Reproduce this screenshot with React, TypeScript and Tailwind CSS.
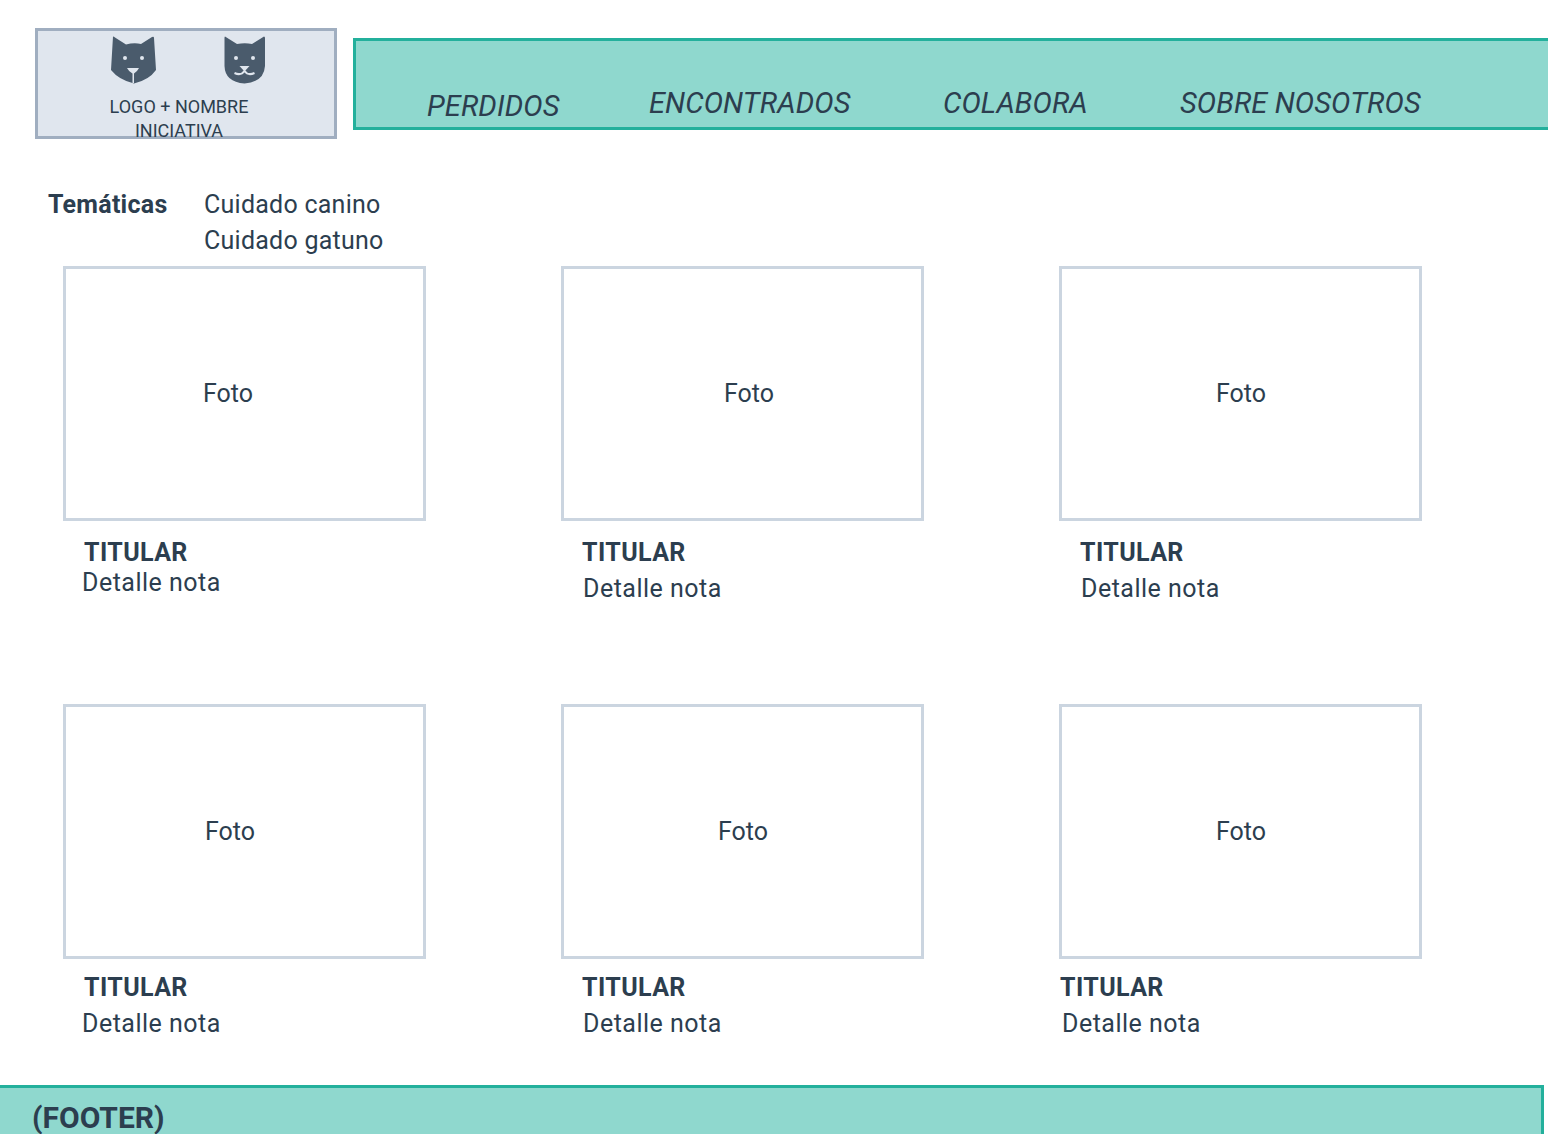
const navItems = [
  { label: "PERDIDOS", className: "w-[222px] mt-[3px]" },
  { label: "ENCONTRADOS", className: "w-[294px]" },
  { label: "COLABORA", className: "w-[237px]" },
  { label: "SOBRE NOSOTROS", className: "w-[280px]" },
];

const cards = [
  { foto: "ml-[137px]", title: "ml-[21px] mt-[14px]", detail: "ml-[19px]" },
  { foto: "ml-[160px]", title: "ml-[21px] mt-[14px]", detail: "ml-[22px] mt-[6px]" },
  { foto: "ml-[154px]", title: "ml-[21px] mt-[14px]", detail: "ml-[22px] mt-[6px]" },
  { foto: "ml-[139px]", title: "ml-[21px] mt-[11px]", detail: "ml-[19px] mt-[6px]" },
  { foto: "ml-[154px]", title: "ml-[21px] mt-[11px]", detail: "ml-[22px] mt-[6px]" },
  { foto: "ml-[154px]", title: "ml-[1px] mt-[11px]", detail: "ml-[3px] mt-[6px]" },
];

function CatIcon() {
  return (
    <svg width="46" height="48" viewBox="0 0 46 48" className="shrink-0">
      <path
        d="M2 0.5 Q3 0.5 4 1.5 L15 8.5 Q23 6.5 30 8 L41 1 Q43 0 43 2 L45 34 Q38 44 23 47.5 Q8 44 0 34 Z"
        fill="#4a5b6c"
      />
      <circle cx="14" cy="22" r="2" fill="#e0e6ee" />
      <circle cx="31" cy="22" r="2" fill="#e0e6ee" />
      <path d="M16 32 H28 Q26 36 23 37.5 V47 H21.5 V37.5 Q18 36 16 32 Z" fill="#e0e6ee" />
    </svg>
  );
}

function DogIcon() {
  return (
    <svg width="42" height="48" viewBox="0 0 42 48" className="shrink-0">
      <path
        d="M1 0.5 L13 8 Q21 6.5 28 8 L40 0.5 Q41 0.5 41 2 V30 Q40 46 20.5 47.5 Q1 46 0.5 30 V2 Q0.5 0.5 1 0.5 Z"
        fill="#4a5b6c"
      />
      <circle cx="12" cy="22" r="2" fill="#e0e6ee" />
      <circle cx="29" cy="22" r="2" fill="#e0e6ee" />
      <path d="M15.5 30 H25.5 L20.5 35.5 Z" fill="#e0e6ee" />
      <path
        d="M10.5 37 Q17 40 20.5 35 Q24 40 30.5 37"
        fill="none"
        stroke="#e0e6ee"
        strokeWidth="2"
      />
    </svg>
  );
}

export default function App() {
  return (
    <div className="h-[1134px] overflow-hidden bg-white text-[#2c3e4f] font-['Roboto',sans-serif]">
      <header className="flex pt-[28px] pl-[35px] mr-[-4px] items-start">
        <div className="w-[302px] h-[111px] border-[3px] border-[#a0aec0] bg-[#e0e6ee] shrink-0">
          <div className="flex pt-[5px] pl-[73px] gap-[67px]">
            <CatIcon />
            <DogIcon />
          </div>
          <div className="w-[282px] mt-[11px] text-center text-[18px] leading-[24px]">
            LOGO + NOMBRE
            <br />
            INICIATIVA
          </div>
        </div>
        <nav className="flex flex-1 ml-[16px] mt-[10px] h-[92px] pl-[71px] pt-[44px] border-[3px] border-[#23b09c] bg-[#8fd8ce] text-[29px] leading-[36px] tracking-[0.1px] italic">
          {navItems.map((item) => (
            <div key={item.label} className={`${item.className} shrink-0`}>
              {item.label}
            </div>
          ))}
        </nav>
      </header>

      <section className="grid grid-cols-[156px_1fr] mt-[48px] ml-[48px] text-[25px] leading-[36px] tracking-[0.25px]">
        <div className="font-bold">Temáticas</div>
        <div>
          <div>Cuidado canino</div>
          <div>Cuidado gatuno</div>
        </div>
      </section>

      <main className="grid grid-cols-[363px_363px_363px] gap-x-[135px] ml-[63px] mt-[7px]">
        {cards.map((card, i) => (
          <article key={i} className="h-[438px]">
            <div className="h-[255px] border-[3px] border-[#cbd5e0] pt-[107px] text-[25px] leading-[36px]">
              <div className={card.foto}>Foto</div>
            </div>
            <div
              className={`${card.title} text-[25px] leading-[36px] tracking-[0.4px] font-bold`}
            >
              TITULAR
            </div>
            <div className={`${card.detail} text-[25px] leading-[24px] tracking-[0.5px]`}>
              Detalle nota
            </div>
          </article>
        ))}
      </main>

      <footer className="w-[1544px] h-[60px] mt-[-57px] border-t-[3px] border-r-[3px] border-[#23b09c] bg-[#8fd8ce] pl-[32px] pt-[12px] text-[30px] leading-[36px] font-bold">
        (FOOTER)
      </footer>
    </div>
  );
}
